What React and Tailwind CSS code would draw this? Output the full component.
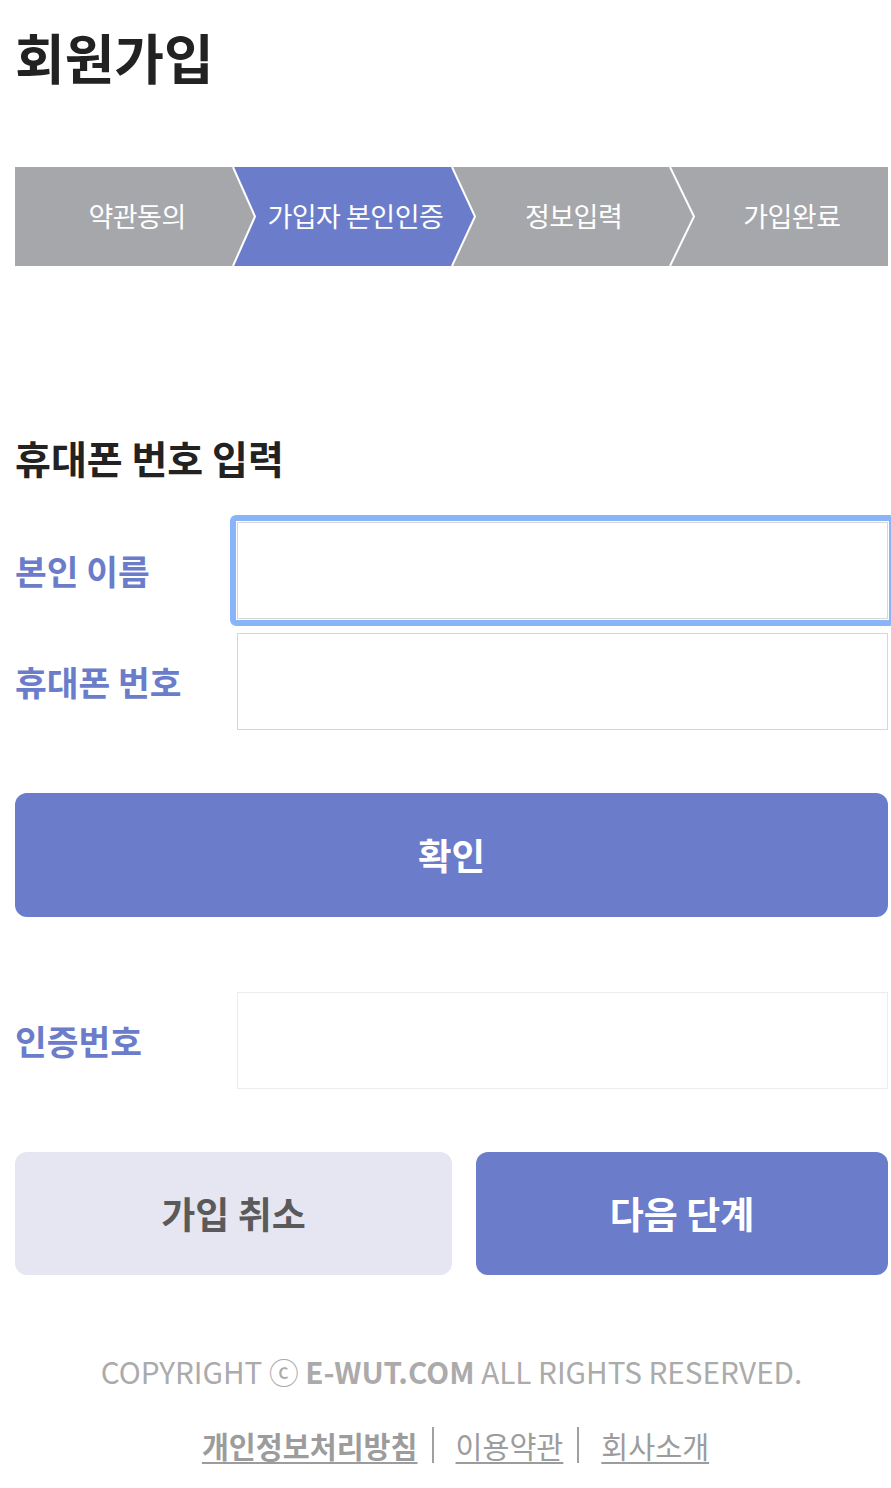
import { useState } from "react";

const steps = ["약관동의", "가입자 본인인증", "정보입력", "가입완료"];

const Stepper = () => (
  <div className="relative h-[99px] w-[873px] bg-[#a6a7ab]">
    <svg
      className="absolute inset-0 h-full w-full"
      viewBox="0 0 873 99"
      preserveAspectRatio="none"
    >
      <polygon points="218,0 437,0 460,49.5 437,99 218,99 240,49.5" fill="#6b7dca" />
      <polyline points="218,0 240,49.5 218,99" fill="none" stroke="#fff" strokeWidth="2" />
      <polyline points="437,0 460,49.5 437,99" fill="none" stroke="#fff" strokeWidth="2" />
      <polyline points="655,0 679,49.5 655,99" fill="none" stroke="#fff" strokeWidth="2" />
    </svg>
    <div className="relative flex h-full">
      {steps.map((s) => (
        <div
          key={s}
          className="flex flex-1 items-center justify-center pl-[26px] text-[27px] tracking-[-0.5px] text-white"
        >
          {s}
        </div>
      ))}
    </div>
  </div>
);

const Field = ({ label, focused, light, value, onChange }) => (
  <div className="flex h-[97px] items-center">
    <div className="w-[222px] text-[34.5px] font-bold text-[#6b7dca]">{label}</div>
    <div className="relative h-full flex-1">
      {focused && (
        <div className="absolute -inset-[7px] rounded-[6px] border-[6px] border-[#8ab4f8]" />
      )}
      <input
        value={value}
        onChange={onChange}
        className={`relative h-full w-full border bg-white px-4 text-[28px] outline-none ${
          light ? "border-[#ececec]" : "border-[#d6d6d6]"
        }`}
      />
    </div>
  </div>
);

export default function App() {
  const [name, setName] = useState("");
  const [phone, setPhone] = useState("");
  const [code, setCode] = useState("");

  return (
    <div
      className="min-h-[1488px] bg-white pl-[15px] pr-[3px] pt-[22px] text-[#222]"
      style={{ fontFamily: '"Noto Sans CJK KR", "Noto Sans", sans-serif' }}
    >
      <h1 className="h-[70px] text-[54px] font-bold leading-[70px] text-[#222]">회원가입</h1>

      <div className="mt-[75px]">
        <Stepper />
      </div>

      <h2 className="mt-[166px] text-[39px] font-bold leading-[50px] text-[#222]">휴대폰 번호 입력</h2>

      <div className="mt-[40px] flex flex-col gap-[14px]">
        <Field label="본인 이름" focused value={name} onChange={(e) => setName(e.target.value)} />
        <Field label="휴대폰 번호" value={phone} onChange={(e) => setPhone(e.target.value)} />
      </div>

      <button className="mt-[63px] flex h-[124px] w-full items-center justify-center rounded-[12px] bg-[#6b7dca] text-[36.5px] font-bold text-white">
        확인
      </button>

      <div className="mt-[75px]">
        <Field label="인증번호" light value={code} onChange={(e) => setCode(e.target.value)} />
      </div>

      <div className="mt-[63px] flex gap-[24px]">
        <button className="flex h-[123px] w-[437px] items-center justify-center rounded-[12px] bg-[#e6e6f2] text-[37px] font-bold text-[#5a5a5a]">
          가입 취소
        </button>
        <button className="flex h-[123px] flex-1 items-center justify-center rounded-[12px] bg-[#6b7dca] text-[37px] font-bold text-white">
          다음 단계
        </button>
      </div>

      <p className="mt-[77px] text-center text-[29.7px] leading-[40px] text-[#ababab]">
        COPYRIGHT ⓒ <span className="font-bold">E-WUT.COM</span> ALL RIGHTS RESERVED.
      </p>

      <div className="mt-[33px] flex items-center justify-center pl-[8px] text-[29.3px] leading-[40px] text-[#9c9c9c]">
        <a className="font-bold underline underline-offset-4">개인정보처리방침</a>
        <span className="ml-[14px] mr-[22px] h-[36px] w-[2px] bg-[#a0a0a0]" />
        <a className="underline underline-offset-4">이용약관</a>
        <span className="ml-[14px] mr-[22px] h-[36px] w-[2px] bg-[#a0a0a0]" />
        <a className="underline underline-offset-4">회사소개</a>
      </div>
    </div>
  );
}
